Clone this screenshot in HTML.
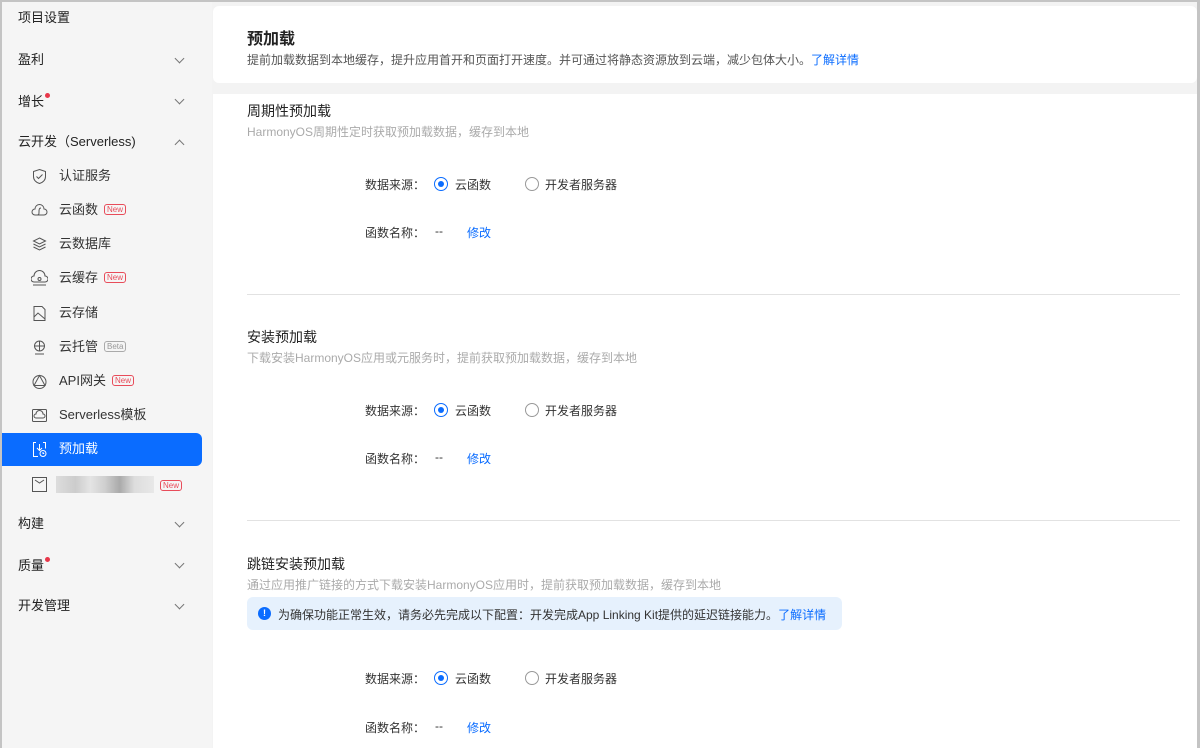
<!DOCTYPE html>
<html><head><meta charset="utf-8"><style>
*{box-sizing:border-box;margin:0;padding:0}
html,body{width:1200px;height:748px;overflow:hidden}
body{background:#f3f3f3;font-family:"Liberation Sans","Noto Sans CJK SC",sans-serif;color:#222;position:relative}
.frame{position:absolute;left:0;top:0;width:1200px;height:748px;border:2px solid #c4c4c4;border-bottom:none;border-right-width:3px;pointer-events:none;z-index:9}
.side{position:absolute;left:0;top:0;width:212px;height:748px;background:#f5f5f5}
.it{position:absolute;left:18px;font-size:13px;color:#222;line-height:16px}
.chev{position:absolute;left:176px;width:7px;height:7px;border-right:1px solid #777;border-bottom:1px solid #777;transform:rotate(45deg)}
.chev.up{transform:rotate(-135deg)}
.sub{position:absolute;left:59px;font-size:13px;color:#333;line-height:16px}
.ic{position:absolute;left:31px;width:17px;height:17px}
.new{display:inline-block;font-size:8px;color:#e84c5a;border:1px solid #e84c5a;border-radius:3px;padding:0 2px;line-height:9px;margin-left:6px;vertical-align:2px}
.beta{color:#999;border-color:#aaa}
.dot{display:inline-block;width:5px;height:5px;border-radius:50%;background:#e8374a;vertical-align:8px;margin-left:1px}
.active{position:absolute;left:2px;top:433px;width:200px;height:33px;background:#0a6cff;border-radius:0 6px 6px 0}
.card{position:absolute;left:213px;top:6px;width:984px;height:77px;background:#fff;border-radius:6px}
.main{position:absolute;left:213px;top:94px;width:984px;height:654px;background:#fff}
.t{position:absolute;left:247px;font-size:14px;color:#222}
.d{position:absolute;left:247px;font-size:12px;color:#aaa}
.lbl{position:absolute;left:365px;font-size:12px;color:#333}
.rad{position:absolute;width:14px;height:14px;border-radius:50%;border:1px solid #999;background:#fff}
.rad.on{border-color:#0a6cff}
.rad.on::after{content:"";position:absolute;left:3px;top:3px;width:6px;height:6px;border-radius:50%;background:#0a6cff}
.opt{position:absolute;font-size:12px;color:#333}
.blue{color:#0a6cff}
.hr{position:absolute;left:247px;width:933px;height:1px;background:#e2e2e2}
</style></head><body>
<div class="side">
<div class="it" style="top:10px">项目设置</div>
<div class="it" style="top:52px">盈利</div><div class="chev" style="top:55px"></div>
<div class="it" style="top:93px">增长<span class="dot"></span></div><div class="chev" style="top:96px"></div>
<div class="it" style="top:134px">云开发（Serverless)</div><div class="chev up" style="top:141px"></div>
<svg class="ic" style="top:168px" viewBox="0 0 17 17" fill="none" stroke="#555"><path d="M8.5 1.5l6 2v5c0 4-3 6-6 7-3-1-6-3-6-7v-5z"/><path d="M5.5 8.5l2 2 4-4"/></svg>
<div class="sub" style="top:168px">认证服务</div>
<svg class="ic" style="top:202px" viewBox="0 0 17 17" fill="none" stroke="#555"><path d="M4 13a3 3 0 010-6 4.5 4.5 0 019 0 3 3 0 010 6z"/><path d="M10 6c-2 0-2 2-2 4s0 3-2 3"/></svg>
<div class="sub" style="top:202px">云函数<span class="new">New</span></div>
<svg class="ic" style="top:236px" viewBox="0 0 17 17" fill="none" stroke="#555"><path d="M8.5 2l6 3-6 3-6-3z"/><path d="M2.5 8l6 3 6-3M2.5 11l6 3 6-3"/></svg>
<div class="sub" style="top:236px">云数据库</div>
<svg class="ic" style="top:270px" viewBox="0 0 17 17" fill="none" stroke="#555"><path d="M3 12a3 3 0 010-6 5.5 5.5 0 0111 0 3 3 0 010 6z"/><path d="M2 15h13"/><circle cx="8.5" cy="9" r="1.5"/></svg>
<div class="sub" style="top:270px">云缓存<span class="new">New</span></div>
<svg class="ic" style="top:305px" viewBox="0 0 17 17" fill="none" stroke="#555"><path d="M3 1.5h8l3 3v11H3z"/><path d="M3 12l4-4 7 6"/></svg>
<div class="sub" style="top:305px">云存储</div>
<svg class="ic" style="top:339px" viewBox="0 0 17 17" fill="none" stroke="#555"><circle cx="8.5" cy="7" r="5"/><path d="M3.5 7h10M8.5 2v10M4 15h9"/></svg>
<div class="sub" style="top:339px">云托管<span class="new beta">Beta</span></div>
<svg class="ic" style="top:373px" viewBox="0 0 17 17" fill="none" stroke="#555"><circle cx="8.5" cy="9" r="6.5"/><path d="M8.5 2.5L3 12.5h11z"/></svg>
<div class="sub" style="top:373px">API网关<span class="new">New</span></div>
<svg class="ic" style="top:407px" viewBox="0 0 17 17" fill="none" stroke="#555"><rect x="1.5" y="2.5" width="14" height="12" rx="1"/><path d="M5 11a2 2 0 010-4 3.5 3.5 0 017 0 2 2 0 010 4z"/></svg>
<div class="sub" style="top:407px">Serverless模板</div>
<div class="active"></div>
<svg class="ic" style="top:441px" viewBox="0 0 17 17" fill="none" stroke="#fff"><path d="M5 1.5H2.5v14H7M12 1.5h2.5v6"/><path d="M8.5 3v6M6 7l2.5 2.5L11 7"/><circle cx="12" cy="12.5" r="3"/><path d="M12 11v1.5h1.2"/></svg>
<div class="sub" style="top:441px;color:#fff">预加载</div>
<svg class="ic" style="top:476px" viewBox="0 0 17 17" fill="none" stroke="#555"><rect x="1.5" y="1.5" width="14" height="14"/><path d="M4 4l4.5 3L13 4"/></svg>
<div style="position:absolute;left:56px;top:476px;width:98px;height:17px;background:linear-gradient(90deg,#ddd,#ccc 20%,#e4e4e4 35%,#cfcfcf 50%,#aaa 65%,#ddd 80%,#e8e8e8)"></div>
<span class="new" style="position:absolute;left:154px;top:480px">New</span>
<div class="it" style="top:516px">构建</div><div class="chev" style="top:519px"></div>
<div class="it" style="top:557px">质量<span class="dot"></span></div><div class="chev" style="top:560px"></div>
<div class="it" style="top:598px">开发管理</div><div class="chev" style="top:601px"></div>
</div>
<div class="card"></div>
<div style="position:absolute;left:247px;top:25px;font-size:16px;font-weight:bold">预加载</div>
<div style="position:absolute;left:247px;top:51px;font-size:12px;color:#555">提前加载数据到本地缓存，提升应用首开和页面打开速度。并可通过将静态资源放到云端，减少包体大小。<span class="blue">了解详情</span></div>
<div class="main"></div>

<div class="t" style="top:101px">周期性预加载</div>
<div class="d" style="top:123px">HarmonyOS周期性定时获取预加载数据，缓存到本地</div>
<div class="lbl" style="top:176px">数据来源：</div>
<div class="rad on" style="left:434px;top:177px"></div><div class="opt" style="left:455px;top:176px">云函数</div>
<div class="rad" style="left:525px;top:177px"></div><div class="opt" style="left:545px;top:176px">开发者服务器</div>
<div class="lbl" style="top:224px">函数名称：</div><div class="opt" style="left:435px;top:224px">--</div><div class="opt blue" style="left:467px;top:224px">修改</div>
<div class="hr" style="top:294px"></div>

<div class="t" style="top:327px">安装预加载</div>
<div class="d" style="top:349px">下载安装HarmonyOS应用或元服务时，提前获取预加载数据，缓存到本地</div>
<div class="lbl" style="top:402px">数据来源：</div>
<div class="rad on" style="left:434px;top:403px"></div><div class="opt" style="left:455px;top:402px">云函数</div>
<div class="rad" style="left:525px;top:403px"></div><div class="opt" style="left:545px;top:402px">开发者服务器</div>
<div class="lbl" style="top:450px">函数名称：</div><div class="opt" style="left:435px;top:450px">--</div><div class="opt blue" style="left:467px;top:450px">修改</div>
<div class="hr" style="top:520px"></div>

<div class="t" style="top:554px">跳链安装预加载</div>
<div class="d" style="top:576px">通过应用推广链接的方式下载安装HarmonyOS应用时，提前获取预加载数据，缓存到本地</div>
<div style="position:absolute;left:247px;top:597px;width:595px;height:33px;background:#e6f1fd;border-radius:6px"></div>
<div style="position:absolute;left:258px;top:607px;width:13px;height:13px;border-radius:50%;background:#0a6cff;color:#fff;font-size:9px;font-weight:bold;text-align:center;line-height:13px">!</div>
<div style="position:absolute;left:278px;top:606px;font-size:12px;color:#333">为确保功能正常生效，请务必先完成以下配置：开发完成App Linking Kit提供的延迟链接能力。<span class="blue">了解详情</span></div>
<div class="lbl" style="top:670px">数据来源：</div>
<div class="rad on" style="left:434px;top:671px"></div><div class="opt" style="left:455px;top:670px">云函数</div>
<div class="rad" style="left:525px;top:671px"></div><div class="opt" style="left:545px;top:670px">开发者服务器</div>
<div class="lbl" style="top:719px">函数名称：</div><div class="opt" style="left:435px;top:719px">--</div><div class="opt blue" style="left:467px;top:719px">修改</div>
<div class="frame"></div>
</body></html>
